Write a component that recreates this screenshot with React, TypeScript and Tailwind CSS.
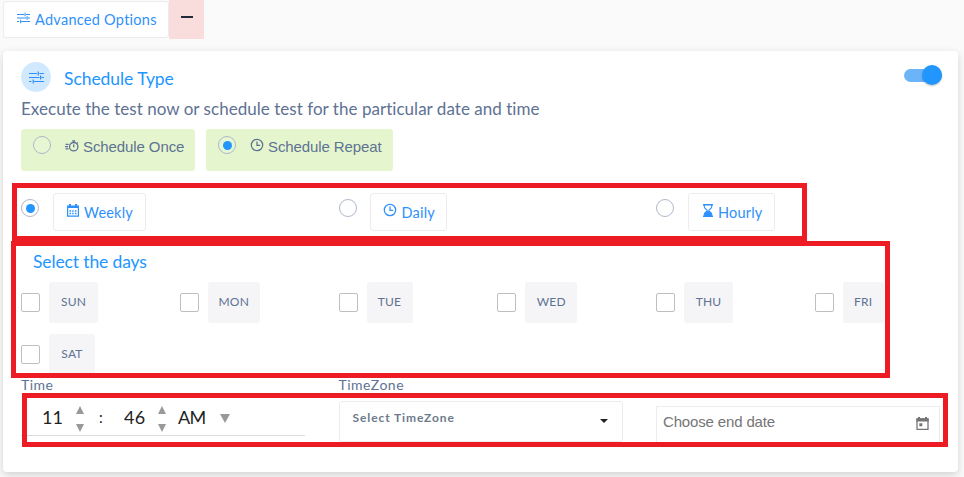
import React from 'react';

const Tune = ({ className = '' }: { className?: string }) => (
  <svg className={className} width="15" height="13" viewBox="0 0 15 13" fill="none" stroke="currentColor" strokeWidth="1.2">
    <path d="M0 2.5h8M10.5 2.500H15M9.3.4v4.200M0 6.500h10.500M12.500 6.500H15M11.600 4.600v3.800M0 10.500h2.500M5 10.500h10M4.200 8.400v4.200" />
  </svg>
);

const Stopwatch = () => (
  <svg width="14" height="12" viewBox="0 0 14 12" fill="none" stroke="currentColor" strokeWidth="1.3">
    <circle cx="8.7" cy="6.7" r="4.2" />
    <path d="M7.2 0.8h3M8.7 1v1.5M8.7 4.4v2.8M12 2.4l.9.9M0.6 4.4h3M0 6.6h3M0.6 8.8h3" />
  </svg>
);

const Clock = () => (
  <svg width="14" height="14" viewBox="0 0 14 14" fill="none" stroke="currentColor" strokeWidth="1.25">
    <circle cx="7" cy="7" r="5.7" />
    <path d="M7 3.4v3.9h3.2" />
  </svg>
);

const Calendar = () => (
  <svg width="12" height="13" viewBox="0 0 12 13" fill="none" stroke="currentColor">
    <path d="M.6 2.1h10.8v10H.6z" strokeWidth="1.2" />
    <path d="M0 3h12M3 0v3M9 0v3" strokeWidth="2" />
    <path d="M2.5 7h7.5M2.5 9.5h7.5" strokeWidth="1.3" strokeDasharray="1.5 1.2" />
  </svg>
);

const Hourglass = () => (
  <svg width="10" height="13" viewBox="0 0 10 13" fill="none" stroke="currentColor">
    <path d="M0 .7h10M0 12.3h10" strokeWidth="1.4" />
    <path d="M1.3 1v1.7c0 2 2.9 2.8 2.9 3.8S1.3 8.3 1.3 10.3V12M8.7 1v1.7c0 2-2.9 2.8-2.9 3.8s2.9 1.8 2.9 3.8V12" strokeWidth="1.1" />
    <path d="M5 6.5l3.5 3.2V12h-7V9.7z" fill="currentColor" stroke="none" />
  </svg>
);

const Radio = ({ checked = false }: { checked?: boolean }) => (
  <span className="flex size-[18px] shrink-0 items-center justify-center rounded-full border border-[#adb8cb] bg-white/10">
    {checked && <span className="size-[9px] rounded-full bg-[#2196ff]" />}
  </span>
);

const Period = ({ checked, icon, label, box, tracking }: { checked?: boolean; icon: React.ReactNode; label: string; box: string; tracking: string }) => (
  <div className="flex px-[15px]">
    <div className="mt-1.5"><Radio checked={checked} /></div>
    <div className={`flex h-[38px] items-center rounded-[3px] border border-[#ececee] text-[#2e90fa] ${box}`}>
      <span className="-mt-1 mr-[5px]">{icon}</span>
      <span className={`pt-px text-[14.5px] leading-5 ${tracking}`}>{label}</span>
    </div>
  </div>
);

const days = [
  { name: 'SUN', width: 'w-[49px]' },
  { name: 'MON', width: 'w-[52px]' },
  { name: 'TUE', width: 'w-[46px]' },
  { name: 'WED', width: 'w-[52px]' },
  { name: 'THU', width: 'w-[49px]' },
  { name: 'FRI', width: 'w-[41px]' },
  { name: 'SAT', width: 'w-[46px]' },
];

const Arrow = ({ down = false, large = false }: { down?: boolean; large?: boolean }) => (
  <svg width={large ? 10 : 8} height={large ? 9 : 8} viewBox="0 0 8 8" preserveAspectRatio="none" fill="#999">
    <path d={down ? 'M0 0h8L4 8z' : 'M4 0l4 8H0z'} />
  </svg>
);

const Spinner = () => (
  <div className="flex w-2 flex-col gap-[10px] pt-1"><Arrow /><Arrow down /></div>
);

export default function App() {
  return (
    <div className="relative h-[477px] w-[964px] overflow-hidden bg-[#fafafa] font-['Lato',sans-serif] whitespace-nowrap text-[#5e7293]">
      <div className="flex pl-[3px]">
        <div className="mt-px flex h-[37px] w-[166px] items-center rounded-[3px] border border-[#ececee] bg-white pl-[13px] text-[#2e90fa]">
          <Tune className="-mt-[3px] mr-[5px] h-3 w-[13px]" />
          <span className="text-[14.5px] leading-5 tracking-[0.27px]">Advanced Options</span>
        </div>
        <div className="flex h-[39px] w-[35px] justify-center bg-[#f9dcdc] pt-4">
          <span className="h-[1.5px] w-[12px] bg-[#212b3b]" />
        </div>
      </div>

      <main className="mt-3 ml-[3px] h-[421px] w-[955px] rounded-[4px] bg-white pl-[3px] shadow-[0_3px_8px_rgba(0,0,0,0.16)]">
        <div className="flex h-[45px] pt-[11px] pr-4 pl-[15px]">
          <span className="flex size-[30px] items-center justify-center rounded-full bg-[#d1e9ff] pt-px text-[#2e90fa]">
            <Tune />
          </span>
          <h2 className="ml-[13px] text-[17.5px] leading-[34px] tracking-[-0.06px] text-[#2196ff]">Schedule Type</h2>
          <span className="mt-[7px] ml-auto flex h-[13px] w-[38px] items-center justify-end rounded-full bg-[#6bb4f8]">
            <span className="size-5 shrink-0 -translate-y-px rounded-full bg-[#2196ff] shadow-[0_1px_2px_rgba(0,0,0,0.25)]" />
          </span>
        </div>
        <p className="h-[33px] pl-[15px] text-[17px] leading-[26px] tracking-[0.035px]">Execute the test now or schedule test for the particular date and time</p>

        <div className="flex h-[64px] gap-[11px] pl-[15px] font-['Liberation_Sans',Arial,sans-serif] text-[15px] leading-[18px] tracking-[-0.1px]">
          <div className="flex h-[42px] w-[174px] rounded-[3px] bg-[#e5f6ce] pt-[7px] pl-3">
            <Radio />
            <span className="mt-1 mr-1 ml-[14px]"><Stopwatch /></span><span className="mt-[2px]">Schedule Once</span>
          </div>
          <div className="flex h-[42px] w-[187px] rounded-[3px] bg-[#e5f6ce] pt-[7px] pl-3">
            <Radio checked />
            <span className="mt-[2px] mr-1 ml-[14px]"><Clock /></span><span className="mt-[2px]">Schedule Repeat</span>
          </div>
        </div>

        <div className="grid h-[56px] w-[952.5px] grid-cols-3">
          <Period checked icon={<Calendar />} label="Weekly" box="ml-3.5 w-[93px] pl-[13px]" tracking="tracking-[0.2px]" />
          <Period icon={<Clock />} label="Daily" box="ml-[13px] w-[77px] pl-3" tracking="tracking-[0.2px]" />
          <Period icon={<Hourglass />} label="Hourly" box="ml-3.5 w-[87px] pl-[14px]" tracking="tracking-[0.2px]" />
        </div>

        <h3 className="h-[33px] pl-[27px] text-[17.5px] leading-[26px] tracking-[-0.13px] text-[#2196ff]">Select the days</h3>
        <div className="grid w-[952.5px] grid-cols-6 gap-y-[11px]">
          {days.map((day) => (
            <div key={day.name} className="flex items-center px-[15px]">
              <span className="size-[19px] rounded-[2px] border border-[#bfbfbf]" />
              <span className={`ml-[9px] h-[41px] rounded-[3px] bg-[#f5f5f8] text-center text-[12px] leading-[40px] tracking-[0.2px] ${day.width}`}>{day.name}</span>
            </div>
          ))}
        </div>

        <div className="grid h-[70px] w-[952.5px] grid-cols-3 text-[14px]">
          <div className="px-[15px]">
            <div className="h-[24px] leading-[20px] tracking-[0.5px]">Time</div>
            <div className="flex h-[37px] w-[284px] items-center border-b border-[#ddd] pl-[21px] text-[#222]">
              <span className="w-[34px] text-[18px]">11</span><Spinner />
              <span className="w-[40px] pl-[15px] text-[15px]">:</span>
              <span className="w-[34px] text-[18px] tracking-[0.4px]">46</span><Spinner />
              <span className="w-[54px] pl-[12px] text-[18px] tracking-[-0.6px]">AM</span>
              <span className="pt-[3px]"><Arrow down large /></span>
            </div>
          </div>
          <div className="px-[15px]">
            <div className="h-[26px] leading-[20px] tracking-[0.5px]">TimeZone</div>
            <div className="flex h-[41px] w-[284px] items-start justify-between rounded-[3px] border border-[#ececee] pr-[14px] pl-[13px] text-[12px] font-bold text-[#6d7a8b]">
              <span className="leading-[32px] tracking-[0.9px]">Select TimeZone</span>
              <span className="mt-[17px] size-0 border-x-[4px] border-t-[4px] border-x-transparent border-t-[#222]" />
            </div>
          </div>
          <div className="px-[15px] pt-[31px]">
            <div className="flex h-[38px] w-[284px] items-start justify-between border border-[#ececee] pr-2.5 pl-1.5 font-['Liberation_Sans',Arial,sans-serif] text-[15px] tracking-[-0.15px] text-[#757575]">
              <span className="leading-[30px]">Choose end date</span>
              <svg className="mt-[10px]" width="13" height="13" viewBox="0 0 13 13"><path d="M1 2h11v10.3H1z" fill="none" stroke="currentColor" strokeWidth="1.3"/><path d="M.4 1.4h12.2v3.2H.4zM2 0h2v2H2zM9 0h2v2H9zM3.3 6.2h3v3h-3z" fill="currentColor"/></svg>
            </div>
          </div>
        </div>
      </main>

      <div className="absolute top-[183px] left-[12px] h-[58px] w-[795px] border-[5px] border-[#ed1c24]" />
      <div className="absolute top-[241px] left-[11px] h-[137px] w-[879px] border-[5px] border-[#ed1c24]" />
      <div className="absolute top-[393px] left-[22px] h-[54px] w-[926px] border-[5px] border-[#ed1c24]" />
    </div>
  );
}
